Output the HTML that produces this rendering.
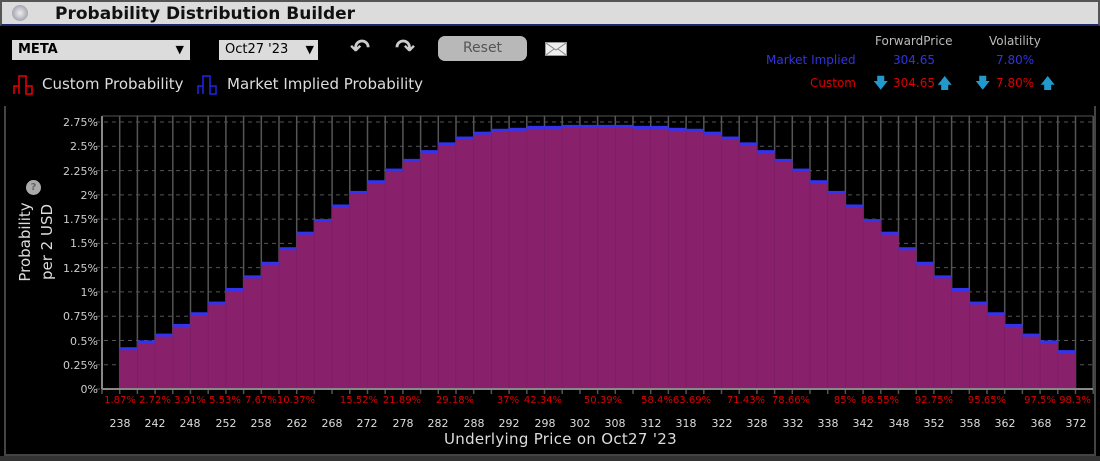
<!DOCTYPE html>
<html><head><meta charset="utf-8"><style>
body{margin:0;width:1100px;height:461px;background:#000;overflow:hidden;font-family:"DejaVu Sans","Liberation Sans",sans-serif;position:relative}
.a{position:absolute;white-space:nowrap}
#title{left:0;top:0;width:1100px;height:26px;background:#dcdcdc;box-sizing:border-box;border:2px solid #555;border-bottom:2px solid #1a2a6a}
.sel{background:#dcdcdc;color:#000;font-size:13px;height:20px;line-height:20px;box-sizing:border-box}
.yl{color:#ccc;font-size:11px;text-align:right;width:60px;left:38px}
.xl{color:#ddd;font-size:11px;width:40px;margin-left:-20px;text-align:center;top:417px}
.pl{color:#d00;font-size:10px;width:60px;margin-left:-30px;text-align:center;top:395px}
.t{font-size:12px}
</style></head><body>
<div class="a" id="title"></div>
<div class="a" style="left:12px;top:5px;width:16px;height:16px;border-radius:50%;background:radial-gradient(circle,#eee,#889);"></div>
<div class="a" style="left:55px;top:4px;font-size:17px;font-weight:bold;color:#111">Probability Distribution Builder</div>
<div class="a sel" style="left:12px;top:40px;width:178px;padding-left:6px;font-weight:bold">META<span style="position:absolute;right:6px;font-size:11px">▼</span></div>
<div class="a sel" style="left:219px;top:40px;width:99px;padding-left:6px">Oct27 '23<span style="position:absolute;right:4px;font-size:11px">▼</span></div>
<div class="a" style="left:350px;top:34px;font-size:24px;color:#ccc;font-weight:bold">↶</div>
<div class="a" style="left:395px;top:34px;font-size:24px;color:#ccc;font-weight:bold">↷</div>
<div class="a" style="left:438px;top:36px;width:89px;height:25px;border-radius:7px;background:#b8b8b8;color:#555;font-size:14px;text-align:center;line-height:25px">Reset</div>
<div class="a" style="left:545px;top:42px;width:22px;height:14px;background:#eee;border:1px solid #999;box-sizing:border-box"><svg width="20" height="12" style="display:block"><path d="M0 0L10 7L20 0M0 12L8 6M20 12L12 6" stroke="#888" fill="none"/></svg></div>
<svg class="a" style="left:13px;top:74px" width="22" height="21"><path d="M1 20V12h5V20M6 20V2h7v18M13 20V12h6v8z" stroke="#e00" stroke-width="1.5" fill="none"/></svg>
<div class="a" style="left:42px;top:75px;font-size:15px;color:#ddd">Custom Probability</div>
<svg class="a" style="left:197px;top:74px" width="22" height="21"><path d="M1 20V12h5V20M6 20V2h7v18M13 20V12h6v8z" stroke="#22e" stroke-width="1.5" fill="none"/></svg>
<div class="a" style="left:227px;top:75px;font-size:15px;color:#ddd">Market Implied Probability</div>
<div class="a t" style="left:875px;top:34px;color:#bbb">ForwardPrice</div>
<div class="a t" style="left:989px;top:34px;color:#bbb">Volatility</div>
<div class="a t" style="left:766px;top:53px;color:#33d">Market Implied</div>
<div class="a t" style="left:893px;top:53px;color:#33d">304.65</div>
<div class="a t" style="left:996px;top:53px;color:#33d">7.80%</div>
<div class="a t" style="left:810px;top:76px;color:#d00">Custom</div>
<div class="a" style="left:873px;top:73px;font-size:15px;color:#29c">🡇</div>
<div class="a t" style="left:893px;top:76px;color:#d00">304.65</div>
<div class="a" style="left:937px;top:73px;font-size:15px;color:#29c">🡅</div>
<div class="a" style="left:975px;top:73px;font-size:15px;color:#29c">🡇</div>
<div class="a t" style="left:996px;top:76px;color:#d00">7.80%</div>
<div class="a" style="left:1040px;top:73px;font-size:15px;color:#29c">🡅</div>
<div class="a" style="left:4px;top:106px;width:1092px;height:350px;border:2px solid #444;border-top:none;box-sizing:border-box"></div>
<div class="a" style="left:0;top:456px;width:1100px;height:5px;background:#333"></div>
<svg id="ch" class="a" style="left:0;top:0" width="1100" height="461"></svg>
<div class="a yl" style="top:116px">2.75%</div>
<div class="a yl" style="top:140px">2.5%</div>
<div class="a yl" style="top:165px">2.25%</div>
<div class="a yl" style="top:189px">2%</div>
<div class="a yl" style="top:213px">1.75%</div>
<div class="a yl" style="top:237px">1.5%</div>
<div class="a yl" style="top:262px">1.25%</div>
<div class="a yl" style="top:286px">1%</div>
<div class="a yl" style="top:310px">0.75%</div>
<div class="a yl" style="top:335px">0.5%</div>
<div class="a yl" style="top:359px">0.25%</div>
<div class="a yl" style="top:383px">0%</div>
<div class="a" style="left:26px;top:180px;width:15px;height:15px;border-radius:50%;background:#aaa;color:#666;font-size:10px;text-align:center;line-height:15px;font-weight:bold">?</div>
<div class="a" style="left:-24px;top:220px;width:120px;transform:rotate(-90deg);color:#ddd;font-size:15px;text-align:center;line-height:22px">Probability<br>per 2 USD</div>
<div class="a" style="left:444px;top:430px;font-size:15px;color:#ddd;letter-spacing:0.3px">Underlying Price on Oct27 '23</div>
<div class="a pl" style="left:120px">1.87%</div><div class="a pl" style="left:155px">2.72%</div><div class="a pl" style="left:190px">3.91%</div><div class="a pl" style="left:225px">5.53%</div><div class="a pl" style="left:261px">7.67%</div><div class="a pl" style="left:296px">10.37%</div><div class="a pl" style="left:359px">15.52%</div><div class="a pl" style="left:402px">21.89%</div><div class="a pl" style="left:455px">29.18%</div><div class="a pl" style="left:508px">37%</div><div class="a pl" style="left:543px">42.34%</div><div class="a pl" style="left:603px">50.39%</div><div class="a pl" style="left:657px">58.4%</div><div class="a pl" style="left:692px">63.69%</div><div class="a pl" style="left:746px">71.43%</div><div class="a pl" style="left:791px">78.66%</div><div class="a pl" style="left:845px">85%</div><div class="a pl" style="left:880px">88.55%</div><div class="a pl" style="left:934px">92.75%</div><div class="a pl" style="left:987px">95.65%</div><div class="a pl" style="left:1040px">97.5%</div><div class="a pl" style="left:1075px">98.3%</div>
<div class="a xl" style="left:120px">238</div><div class="a xl" style="left:155px">242</div><div class="a xl" style="left:190px">248</div><div class="a xl" style="left:226px">252</div><div class="a xl" style="left:261px">258</div><div class="a xl" style="left:297px">262</div><div class="a xl" style="left:332px">268</div><div class="a xl" style="left:367px">272</div><div class="a xl" style="left:403px">278</div><div class="a xl" style="left:438px">282</div><div class="a xl" style="left:474px">288</div><div class="a xl" style="left:509px">292</div><div class="a xl" style="left:545px">298</div><div class="a xl" style="left:580px">302</div><div class="a xl" style="left:615px">308</div><div class="a xl" style="left:651px">312</div><div class="a xl" style="left:686px">318</div><div class="a xl" style="left:722px">322</div><div class="a xl" style="left:757px">328</div><div class="a xl" style="left:793px">332</div><div class="a xl" style="left:828px">338</div><div class="a xl" style="left:863px">342</div><div class="a xl" style="left:899px">348</div><div class="a xl" style="left:934px">352</div><div class="a xl" style="left:970px">358</div><div class="a xl" style="left:1005px">362</div><div class="a xl" style="left:1041px">368</div><div class="a xl" style="left:1076px">372</div>
<script>
var s='',L=102,W=17.7,B=389,T=116,k=24.27/0.25;
var v=[0.41,0.48,0.55,0.65,0.77,0.88,1.02,1.15,1.29,1.44,1.6,1.73,1.88,2.02,2.13,2.25,2.35,2.44,2.52,2.58,2.63,2.66,2.67,2.69,2.69,2.70,2.70];
v=v.concat(v.slice().reverse());v[53]=0.38;
for(var i=0;i<12;i++){var y=B-i*0.25*k;s+='<line x1="96" x2="1093" y1="'+y+'" y2="'+y+'" stroke="#555" stroke-dasharray="4,4"/>';}
for(i=0;i<=56;i++){var x=L+i*W;s+='<line x1="'+x+'" x2="'+x+'" y1="'+T+'" y2="'+(B+5)+'" stroke="#555" stroke-width="1.5"/>';}
for(i=0;i<54;i++){var x=L+(i+1)*W,h=v[i]*k;s+='<rect x="'+x+'" y="'+(B-h)+'" width="'+W+'" height="'+h+'" fill="#88206c" stroke="#7a1c62" stroke-width="0.5"/><rect x="'+x+'" y="'+(B-h-2)+'" width="'+W+'" height="3" fill="#3333ee"/>';}
s+='<line x1="'+L+'" x2="'+L+'" y1="'+T+'" y2="'+B+'" stroke="#888" stroke-width="2"/><line x1="'+L+'" x2="1093" y1="'+B+'" y2="'+B+'" stroke="#888" stroke-width="2"/><line x1="'+L+'" x2="1093" y1="'+T+'" y2="'+T+'" stroke="#555"/>';
document.getElementById('ch').innerHTML=s;
</script>
</body></html>
